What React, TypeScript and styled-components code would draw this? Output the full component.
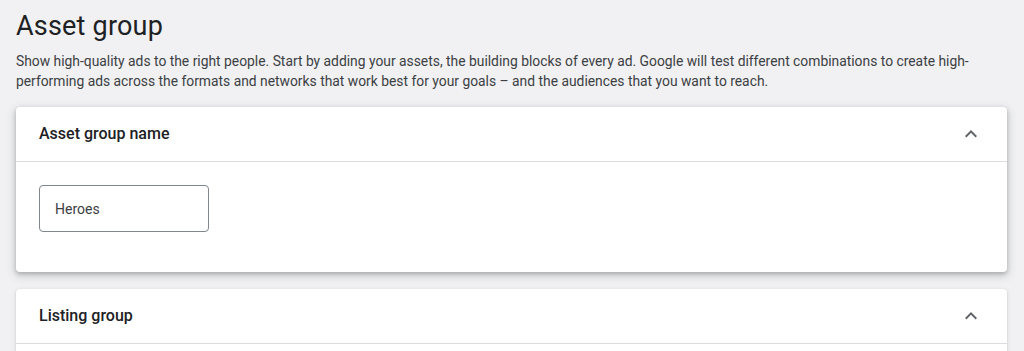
import React from 'react';
import styled, { createGlobalStyle } from 'styled-components';

const GlobalStyle = createGlobalStyle`
  html, body {
    margin: 0;
    padding: 0;
    background-color: #f1f1f3;
    font-family: Roboto, "Liberation Sans", Arial, sans-serif;
    color: #202124;
  }
`;

const Page = styled.div`
  padding: 8px 16px 0 16px;
  height: 351px;
  box-sizing: border-box;
  overflow: hidden;
`;

const Title = styled.h1`
  margin: 0;
  font-size: 27px;
  font-weight: 400;
  line-height: 36px;
  letter-spacing: 0.2px;
  color: #202124;
`;

const Description = styled.p`
  margin: 7px 0 0 0;
  font-size: 13.85px;
  line-height: 20px;
  color: #3c4043;
`;

const Stack = styled.div`
  display: flex;
  flex-direction: column;
  gap: 17px;
  margin-top: 16px;
  margin-right: 1px;
`;

const Card = styled.section<{ $raised?: boolean }>`
  background: #fff;
  border-radius: 4px;
  box-shadow: ${p => p.$raised
    ? '0 2px 4px rgba(60,64,67,0.3), 0 3px 8px 2px rgba(60,64,67,0.15)'
    : '0 1px 2px rgba(60,64,67,0.2), 0 1px 4px 1px rgba(60,64,67,0.08)'};
`;

const CardHeader = styled.div`
  display: flex;
  align-items: center;
  justify-content: space-between;
  height: 53px;
  padding: 0 24px 1px 23px;
  border-bottom: 1px solid #dadce0;
  font-size: 16px;
  font-weight: 500;
  color: #202124;
`;

const CardBody = styled.div`
  padding: 23px 23px 40px 23px;
`;

const Field = styled.div`
  width: 170px;
  height: 47px;
  box-sizing: border-box;
  border: 1px solid #80868b;
  border-radius: 4px;
  display: flex;
  align-items: center;
  padding-left: 15px;
  font-size: 14px;
  color: #3c4043;
`;

const Chevron = () => (
  <svg width="24" height="24" viewBox="0 0 24 24" fill="#5f6368">
    <path d="M7.41 15.41L12 10.83l4.59 4.58L18 14l-6-6-6 6z" />
  </svg>
);

export default function App() {
  return (
    <Page>
      <GlobalStyle />
      <Title>Asset group</Title>
      <Description>
        Show high-quality ads to the right people. Start by adding your assets, the building blocks of every ad. Google will test different combinations to create high-performing ads across the formats and networks that work best for your goals – and the audiences that you want to reach.
      </Description>
      <Stack>
        <Card $raised>
          <CardHeader>
            Asset group name
            <Chevron />
          </CardHeader>
          <CardBody>
            <Field>Heroes</Field>
          </CardBody>
        </Card>
        <Card>
          <CardHeader>
            Listing group
            <Chevron />
          </CardHeader>
          <CardBody />
        </Card>
      </Stack>
    </Page>
  );
}
